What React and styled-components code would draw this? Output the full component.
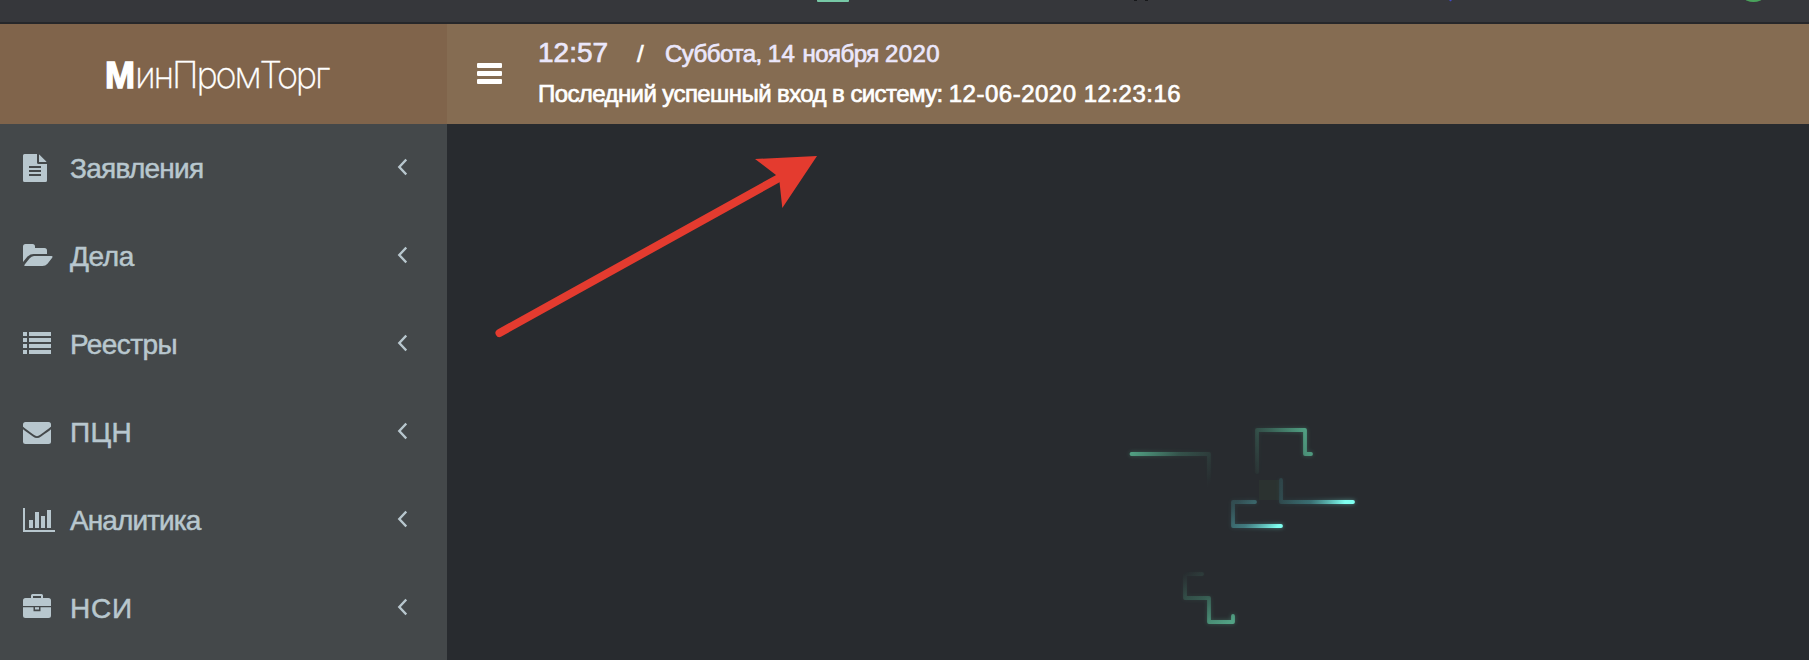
import React from "react";
import styled, { createGlobalStyle } from "styled-components";

const colors = {
  chrome: "#36373b",
  chromeLine: "#26272a",
  brand: "#80644b",
  header: "#856c52",
  sidebar: "#44484a",
  canvas: "#282b2f",
  nav: "#b8c7ce",
};

const GlobalStyle = createGlobalStyle`
  * { box-sizing: border-box; }
  body {
    margin: 0;
    overflow: hidden;
    background: ${colors.canvas};
    font-family: "Liberation Sans", Arial, sans-serif;
  }
`;

const Page = styled.div`
  display: flex;
  flex-direction: column;
  width: 100%;
  height: 100vh;
`;

const BrowserStrip = styled.div`
  flex: 0 0 24px;
  background: ${colors.chrome};
  border-bottom: 2px solid ${colors.chromeLine};
  svg { display: block; }
`;

const TopBar = styled.header`
  display: flex;
  flex: 0 0 100px;
  color: #fff;
`;

const Brand = styled.div`
  display: flex;
  flex: 0 0 447px;
  align-items: baseline;
  padding: 29px 0 0 105px;
  background: ${colors.brand};
  font-family: Inter, sans-serif;
  font-size: 36px;
  font-weight: 200;
  line-height: 44px;
  letter-spacing: -2.2px;
  white-space: nowrap;
  -webkit-text-stroke: 0.3px #fff;
  b {
    font-family: "Liberation Sans", Arial, sans-serif;
    font-weight: 700;
    letter-spacing: 0;
    -webkit-text-stroke: 1.4px #fff;
  }
`;

const HeaderBar = styled.div`
  display: flex;
  flex: 1;
  background: ${colors.header};
`;

const MenuButton = styled.button`
  display: flex;
  flex-direction: column;
  gap: 3px;
  width: 91px;
  margin: 0;
  padding: 39px 36px 0 30px;
  border: 0;
  background: none;
`;

const MenuBar = styled.span`
  height: 5px;
  border-radius: 1px;
  background: #fff;
`;

const Status = styled.div`
  display: flex;
  flex-direction: column;
  padding-top: 9px;
  white-space: nowrap;
`;

const StatusLine = styled.div`
  display: flex;
  align-items: baseline;
  height: 41px;
  line-height: 40px;
  font-size: 24px;
  white-space: pre;
  -webkit-text-stroke: 0.7px currentColor;
`;

const Clock = styled.span`
  width: 99px;
  color: #ebe7fb;
  font-size: 28px;
`;

const Slash = styled.span`
  width: 28px;
`;

const Run = styled.span`
  color: ${(p) => (p.$soft ? "#ebe7fb" : "#fff")};
  letter-spacing: ${(p) => p.$track || 0}px;
`;

const Body = styled.div`
  display: flex;
  flex: 1;
  min-height: 0;
`;

const Sidebar = styled.nav`
  flex: 0 0 447px;
  background: ${colors.sidebar};
`;

const NavItem = styled.a`
  display: flex;
  align-items: center;
  height: 88px;
  padding: 0 40px 0 23px;
  color: ${colors.nav};
  font-size: 28px;
`;

const NavIcon = styled.svg`
  flex: 0 0 47px;
  height: 32px;
  fill: currentColor;
`;

const NavLabel = styled.span`
  flex: 1;
  padding-top: 2px;
  line-height: 32px;
  letter-spacing: ${(p) => p.$track}px;
  -webkit-text-stroke: 0.5px currentColor;
`;

const Chevron = styled.svg`
  width: 10px;
  height: 18px;
  margin-top: -2px;
  fill: none;
  stroke: currentColor;
  stroke-width: 2.4;
`;

const Canvas = styled.main`
  flex: 1;
  min-width: 0;
  background: ${colors.canvas};
  svg { display: block; }
`;

const icons = {
  file: (
    <>
      <path d="M1.5 2H14V10.500Q14 12 15.500 12H24V28.500Q24 30 22.500 30H1.500Q0 30 0 28.500V3.500Q0 2 1.500 2zM6 14v2h12v-2zM6 18v2h12v-2zM6 22v2h12v-2z" fillRule="evenodd" />
      <path d="M16 2.500Q16.500 2.700 17 3.200L22.800 9Q23.300 9.500 23.500 10H16z" />
    </>
  ),
  folder: (
    <>
      <path d="M0 22V6.500Q0 4 2.500 4H9.500Q12 4 12 6.500V8H21.500Q24 8 24 10.500V14H10.500Q7 14 4.500 16.500z" />
      <path d="M11 16H28.500Q30.300 16 29 18L24.500 23.800Q22.500 26 19.500 26H2Q.5 26 1.700 24.500L6.500 18.500Q8.500 16 11 16z" />
    </>
  ),
  list: <path d="M0 4h4v4H0zM6 4h22v4H6zM0 10h4v4H0zM6 10h22v4H6zM0 16h4v4H0zM6 16h22v4H6zM0 22h4v4H0zM6 22h22v4H6z" />,
  mail: (
    <>
      <rect y="6" width="28" height="22" rx="2.5" />
      <path d="M-.5 11.500C2 14 7 17.200 10.500 19.800Q14 22.400 17.500 19.800C21 17.200 26 14 28.500 11.500" fill="none" stroke={colors.sidebar} strokeWidth="1.9" />
    </>
  ),
  chart: <path d="M0 4h2v22h30v2H0zM6 16h4v8H6zM12 8h4v16h-4zM18 12h4v12h-4zM24 6h4v18h-4z" />,
  case: (
    <>
      <path d="M8 6V3.500Q8 2 9.500 2H18.500Q20 2 20 3.500V6H25.500Q28 6 28 8.500V14H0V8.500Q0 6 2.500 6zM10 4v2h8V4z" fillRule="evenodd" />
      <path d="M0 15.200H10.500V19.200H17.500V15.200H28V23.500Q28 26 25.500 26H2.500Q0 26 0 23.500z" />
      <path d="M12 15.200h4v2.300h-4z" />
    </>
  ),
};

const items = [
  { label: "Заявления", icon: "file", track: -0.75 },
  { label: "Дела", icon: "folder", track: -0.4 },
  { label: "Реестры", icon: "list", track: -0.6 },
  { label: "ПЦН", icon: "mail", track: 0.3 },
  { label: "Аналитика", icon: "chart", track: -0.9 },
  { label: "НСИ", icon: "case", track: 0.8 },
];

function Fade({ id, from, to, a, b, min = 0, mid = 0.35, max = 1 }) {
  return (
    <linearGradient id={id} gradientUnits="userSpaceOnUse" x1={a[0]} y1={a[1]} x2={b[0]} y2={b[1]}>
      <stop offset="0" stopColor={from} stopOpacity={min} />
      <stop offset="0.5" stopColor={from} stopOpacity={mid} />
      <stop offset="1" stopColor={to} stopOpacity={max} />
    </linearGradient>
  );
}

const traces = [
  { id: "t1", d: "M1209 495V454H1131.500", stroke: "url(#g1)" },
  { id: "t2", d: "M1257 472V430H1305V454H1311", stroke: "url(#g2)" },
  { id: "t3", d: "M1281 480V502H1353", stroke: "url(#g3)" },
  { id: "t4", d: "M1255 502H1233V526H1281", stroke: "url(#g4)" },
  { id: "t5", d: "M1202 574H1185V598H1209V622H1233V616", stroke: "url(#g5)" },
];

function Scene() {
  return (
    <svg width="1362" height="536" viewBox="447 124 1362 536">
      <defs>
        <Fade id="g1" from="#4fa586" to="#55ab8b" a={[1206, 490]} b={[1136, 440]} mid={0.27} max={0.95} />
        <Fade id="g2" from="#4fa586" to="#55ab8b" a={[1250, 469]} b={[1313, 446]} mid={0.4} max={0.9} />
        <Fade id="g3" from="#3e8084" to="#7ffff0" a={[1279, 490]} b={[1345, 502]} min={0.25} mid={0.75} />
        <Fade id="g4" from="#4b9a9f" to="#7ffff0" a={[1244, 495]} b={[1276, 528]} min={0.25} mid={0.65} />
        <Fade id="g5" from="#4fa586" to="#55ab8b" a={[1195, 566]} b={[1230, 622]} min={0} mid={0.35} max={0.9} />
        <filter id="glow" filterUnits="userSpaceOnUse" x="1100" y="400" width="300" height="250">
          <feGaussianBlur stdDeviation="2.2" />
        </filter>
      </defs>
      <rect x="1259" y="480" width="20" height="20" fill="#2b3230" />
      <g fill="none" strokeLinecap="round" strokeLinejoin="round">
        <g strokeWidth="4" opacity="0.45" filter="url(#glow)">
          {traces.map((t) => <path key={t.id} d={t.d} stroke={t.stroke} />)}
        </g>
        <g strokeWidth="3.8">
          {traces.map((t) => <path key={t.id} d={t.d} stroke={t.stroke} />)}
        </g>
      </g>
      <g fill="#e43b2f">
        <path d="M499.500 333L779 178" stroke="#e43b2f" strokeWidth="8" strokeLinecap="round" />
        <path d="M817 156L755 159L776 175L779.500 182L782.300 208z" />
      </g>
    </svg>
  );
}

export default function App() {
  return (
    <>
      <GlobalStyle />
      <Page>
        <BrowserStrip>
          <svg width="1809" height="3">
            <rect x="817" y="-6" width="32" height="8" rx="1" fill="#77c8a6" />
            <path d="M1134 0h3v1h-3zM1145 0h3v1h-3z" fill="#17181a" />
            <path d="M1449 0h3l-1.500 1.500z" fill="#4149c9" />
            <ellipse cx="1753.500" cy="-2" rx="9" ry="4" fill="#4aa35c" />
          </svg>
        </BrowserStrip>
        <TopBar>
          <Brand><b>М</b><span>инПромТорг</span></Brand>
          <HeaderBar>
            <MenuButton aria-label="Меню"><MenuBar /><MenuBar /><MenuBar /></MenuButton>
            <Status>
              <StatusLine>
                <Clock>12:57</Clock>
                <Slash>/</Slash>
                <Run $soft $track={-0.5}>Суббота, </Run>
                <Run $soft $track={0.4}>14 </Run>
                <Run $soft $track={-0.5}>ноября </Run>
                <Run $soft $track={0.4}>2020</Run>
              </StatusLine>
              <StatusLine>
                <Run $track={-0.58}>Последний успешный вход в систему: </Run>
                <Run $track={0.5}>12-06-2020 12:23:16</Run>
              </StatusLine>
            </Status>
          </HeaderBar>
        </TopBar>
        <Body>
          <Sidebar>
            {items.map((item) => (
              <NavItem key={item.label}>
                <NavIcon width="47" height="32" viewBox="0 0 47 32">{icons[item.icon]}</NavIcon>
                <NavLabel $track={item.track}>{item.label}</NavLabel>
                <Chevron viewBox="0 0 10 18"><path d="M9.300 1.500L2.300 9L9.300 16.500" /></Chevron>
              </NavItem>
            ))}
          </Sidebar>
          <Canvas><Scene /></Canvas>
        </Body>
      </Page>
    </>
  );
}
